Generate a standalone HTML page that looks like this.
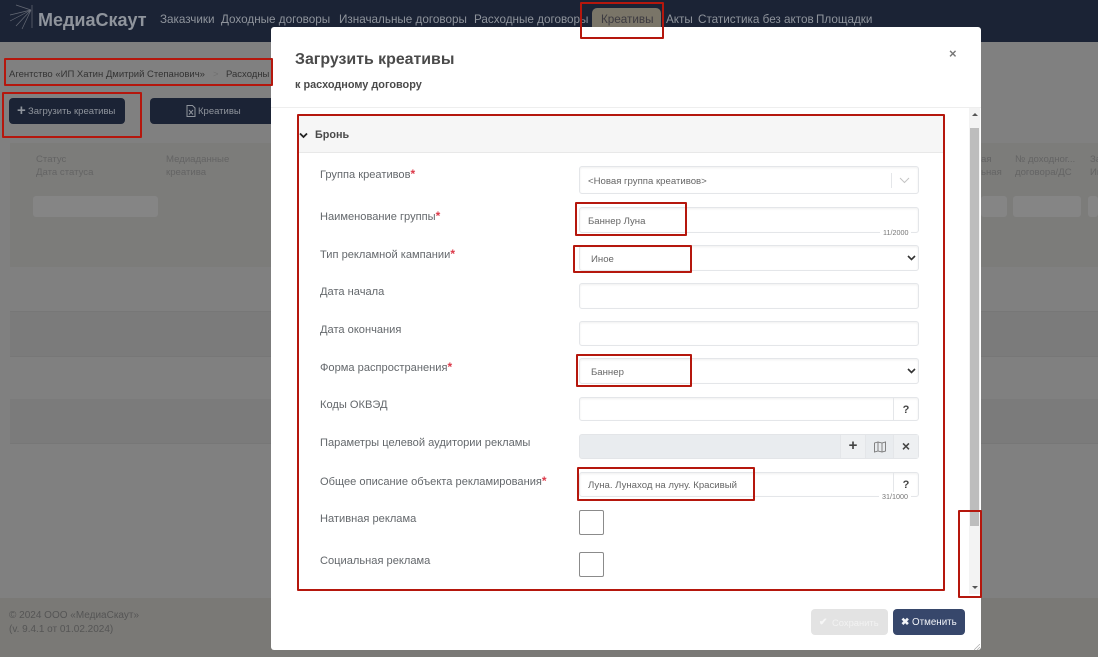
<!DOCTYPE html>
<html lang="ru">
<head>
<meta charset="utf-8">
<title>МедиаСкаут</title>
<style>
html,body{margin:0;padding:0}
body{width:1098px;height:657px;overflow:hidden;position:relative;background:#808080;font-family:"Liberation Sans",sans-serif;color:#555}
.a{position:absolute;white-space:nowrap}
.red{position:absolute;border:2px solid #b5170d;box-sizing:border-box;border-radius:1px}
.nav{position:absolute;top:12px;font-size:11.7px;line-height:16px;color:#8f949c;white-space:nowrap}
.lbl{position:absolute;left:320px;font-size:11.1px;line-height:15px;color:#64686c;white-space:nowrap}
.lbl b{color:#dc3a4a;font-weight:700;font-size:12px}
.inp{position:absolute;left:579px;width:340px;box-sizing:border-box;background:#fff;border:1px solid #e4e6e9;border-radius:3px;box-shadow:inset 0 1px 2px #f0f0f0;font-size:9.6px;color:#666;line-height:28px;padding-left:8px;white-space:nowrap}
.cb{position:absolute;left:579px;width:25px;height:25px;box-sizing:border-box;border:1px solid #8b8b8b;border-radius:2px;background:#fff}
.addon{position:absolute;top:0;bottom:0;border-left:1px solid #e4e6e9;text-align:center;font-weight:700;color:#444}
.small{position:absolute;font-size:7.2px;color:#777;background:#fff;padding:0 3px;line-height:9px}
.th{position:absolute;top:153px;font-size:9.6px;line-height:13px;color:#646464;white-space:nowrap}
.filter{position:absolute;top:196px;height:21px;background:#858585;border-radius:3px}
</style>
</head>
<body>
<!-- header -->
<div class="a" style="left:0;top:0;width:1098px;height:42px;background:#1b2335"></div>
<svg class="a" style="left:8px;top:4px" width="26" height="26" viewBox="0 0 26 26" fill="none" stroke="#666b76" stroke-width=".7"><path d="M24 1V24M23 6L8 1M23 6L2 11M23 6L2 17M23 6L8 22M23 6L14 25"/></svg>
<div class="a" style="left:38px;top:9px;font-size:18px;line-height:22px;font-weight:700;color:#8f949c">МедиаСкаут</div>
<div class="nav" style="left:160px">Заказчики</div>
<div class="nav" style="left:221px">Доходные договоры</div>
<div class="nav" style="left:339px">Изначальные договоры</div>
<div class="nav" style="left:474px">Расходные договоры</div>
<div class="a" style="left:592px;top:8px;width:69px;height:20px;background:#7a7568;border-radius:5px 5px 0 0"></div>
<div class="nav" style="left:601px;color:#3c3a40">Креативы</div>
<div class="nav" style="left:666px">Акты</div>
<div class="nav" style="left:698px">Статистика без актов</div>
<div class="nav" style="left:816px">Площадки</div>

<!-- page behind -->
<div class="a" style="left:9px;top:68px;font-size:9.5px;line-height:14px;color:#333">Агентство «ИП Хатин Дмитрий Степанович»</div>
<div class="a" style="left:213px;top:68px;font-size:9.5px;line-height:14px;color:#707070">&gt;</div>
<div class="a" style="left:226px;top:68px;font-size:9.5px;line-height:14px;color:#333">Расходны</div>
<div class="a" style="left:9px;top:98px;width:116px;height:26px;background:#1b2335;border-radius:4px"></div>
<div class="a" style="left:17px;top:103px;font-size:15px;line-height:15px;font-weight:700;color:#8f949c">+</div>
<div class="a" style="left:28px;top:105px;font-size:9.5px;line-height:14px;color:#8f949c">Загрузить креативы</div>
<div class="a" style="left:150px;top:98px;width:122px;height:26px;background:#1b2335;border-radius:4px 0 0 4px"></div>
<svg class="a" style="left:186px;top:105px" width="10" height="12" viewBox="0 0 10 12" fill="none" stroke="#8f949c"><path d="M1 .5H6.500L9 3V11.500H1ZM3 5L7 9.500M7 5L3 9.500"/></svg>
<div class="a" style="left:198px;top:105px;font-size:9.5px;line-height:14px;color:#8f949c">Креативы</div>
<div class="a" style="left:10px;top:143px;width:261px;height:124px;background:#7c7c7a"></div>
<div class="a" style="left:981px;top:143px;width:117px;height:124px;background:#7c7c7a"></div>
<div class="th" style="left:36px">Статус<br>Дата статуса</div>
<div class="th" style="left:166px">Медиаданные<br>креатива</div>
<div class="th" style="left:981px">ая<br>ьная</div>
<div class="th" style="left:1015px">№ доходног...<br>договора/ДС</div>
<div class="th" style="left:1090px">За<br>Ин</div>
<div class="filter" style="left:33px;width:125px"></div>
<div class="filter" style="left:981px;width:26px"></div>
<div class="filter" style="left:1013px;width:68px"></div>
<div class="filter" style="left:1088px;width:10px"></div>
<div class="a" style="left:10px;top:311px;width:261px;height:44px;background:#7b7b7b;border-top:1px solid #777;border-bottom:1px solid #777"></div>
<div class="a" style="left:10px;top:399px;width:261px;height:44px;background:#7b7b7b;border-bottom:1px solid #777"></div>
<div class="a" style="left:981px;top:311px;width:117px;height:44px;background:#7b7b7b;border-top:1px solid #777;border-bottom:1px solid #777"></div>
<div class="a" style="left:981px;top:399px;width:117px;height:44px;background:#7b7b7b;border-bottom:1px solid #777"></div>
<div class="a" style="left:0;top:598px;width:1098px;height:59px;background:#7a7976"></div>
<div class="a" style="left:9px;top:609px;font-size:10px;line-height:14px;color:#555">© 2024 ООО «МедиаСкаут»<br>(v. 9.4.1 от 01.02.2024)</div>

<!-- modal -->
<div class="a" style="left:271px;top:27px;width:710px;height:623px;background:#fff;border-radius:3px"></div>
<div class="a" style="left:295px;top:49px;font-size:15.9px;line-height:21px;font-weight:700;color:#4a4a4a">Загрузить креативы</div>
<div class="a" style="left:295px;top:78px;font-size:10.9px;line-height:15px;font-weight:700;color:#4a4a4a">к расходному договору</div>
<div class="a" style="left:949px;top:46px;font-size:13px;line-height:15px;font-weight:700;color:#777">×</div>
<div class="a" style="left:271px;top:107px;width:710px;height:1px;background:#eeeeee"></div>

<!-- section -->
<div class="a" style="left:299px;top:116px;width:645px;height:37px;background:#f6f6f6;border-bottom:1px solid #e8e8e8;box-sizing:border-box"></div>
<svg class="a" style="left:299px;top:132px" width="9" height="7" viewBox="0 0 9 7" fill="none" stroke="#222" stroke-width="1.800"><path d="M1 1.500L4.500 5L8 1.500"/></svg>
<div class="a" style="left:315px;top:128px;font-size:10.8px;line-height:15px;font-weight:700;color:#4a4a4a">Бронь</div>

<div class="lbl" style="top:167px">Группа креативов<b>*</b></div>
<div class="inp" style="top:166px;height:28px;line-height:29px">&lt;Новая группа креативов&gt;</div>
<div class="a" style="left:891px;top:173px;width:1px;height:15px;background:#e4e6e9"></div>
<svg class="a" style="left:899px;top:177px" width="11" height="7" viewBox="0 0 11 7" fill="none" stroke="#c4c4c4" stroke-width="1"><path d="M1 1L5.500 5.500L10 1"/></svg>

<div class="lbl" style="top:209px">Наименование группы<b>*</b></div>
<div class="inp" style="top:207px;height:26px">Баннер Луна</div>
<div class="small" style="left:880px;top:228px">11/2000</div>

<div class="lbl" style="top:247px">Тип рекламной кампании<b>*</b></div>
<div class="inp" style="top:245px;height:26px;padding-left:11px">Иное</div>
<svg class="a" style="left:907px;top:255px" width="9" height="6" viewBox="0 0 9 6" fill="none" stroke="#333" stroke-width="1.600"><path d="M1 1L4.500 4.500L8 1"/></svg>

<div class="lbl" style="top:285px">Дата начала</div>
<div class="inp" style="top:283px;height:26px"></div>

<div class="lbl" style="top:323px">Дата окончания</div>
<div class="inp" style="top:321px;height:25px"></div>

<div class="lbl" style="top:360px">Форма распространения<b>*</b></div>
<div class="inp" style="top:358px;height:26px;padding-left:11px">Баннер</div>
<svg class="a" style="left:907px;top:368px" width="9" height="6" viewBox="0 0 9 6" fill="none" stroke="#333" stroke-width="1.600"><path d="M1 1L4.500 4.500L8 1"/></svg>

<div class="lbl" style="top:398px">Коды ОКВЭД</div>
<div class="inp" style="top:397px;height:24px"><div class="addon" style="right:0;width:24px;line-height:24px;font-size:11px">?</div></div>

<div class="lbl" style="top:436px">Параметры целевой аудитории рекламы</div>
<div class="inp" style="top:434px;height:25px;background:#e9ecef;border-color:#e3e5e8;box-shadow:none">
  <div class="addon" style="right:0;width:24px;line-height:23px;font-size:14px;background:#eef0f2">×</div>
  <div class="addon" style="right:25px;width:27px;background:#e9ecef"></div>
  <div class="addon" style="right:53px;width:24px;line-height:22px;font-size:15px;background:#eef0f2">+</div>
</div>
<svg class="a" style="left:873px;top:441px" width="14" height="12" viewBox="0 0 14 12" fill="none" stroke="#777" stroke-width=".9"><path d="M1.500 2L5 1L9 2L12.500 1V10L9 11L5 10L1.500 11ZM5 1V10M9 2V11"/></svg>

<div class="lbl" style="top:474px">Общее описание объекта рекламирования<b>*</b></div>
<div class="inp" style="top:472px;height:25px;line-height:26px"><span>Луна. Лунаход на луну. Красивый</span><div class="addon" style="right:0;width:24px;line-height:24px;font-size:11px">?</div></div>
<div class="small" style="left:879px;top:492px">31/1000</div>

<div class="lbl" style="top:512px">Нативная реклама</div>
<div class="cb" style="top:510px"></div>
<div class="lbl" style="top:554px">Социальная реклама</div>
<div class="cb" style="top:552px"></div>

<!-- scrollbar -->
<div class="a" style="left:969px;top:108px;width:11px;height:486px;background:#f3f3f3"></div>
<div class="a" style="left:970px;top:128px;width:9px;height:398px;background:#bdbdbd"></div>
<div class="a" style="left:971.500px;top:113px;width:0;height:0;border:3px solid transparent;border-top:0;border-bottom:3px solid #555"></div>
<div class="a" style="left:971.500px;top:586px;width:0;height:0;border:3px solid transparent;border-bottom:0;border-top:3px solid #555"></div>

<!-- buttons -->
<div class="a" style="left:811px;top:609px;width:77px;height:26px;background:#e3e3e3;border-radius:4px"></div>
<div class="a" style="left:819px;top:616px;font-size:10px;line-height:13px;color:#f6f6f6;font-weight:700">✔</div>
<div class="a" style="left:832px;top:616px;font-size:9.400px;line-height:13px;color:#f2f2f2">Сохранить</div>
<div class="a" style="left:893px;top:609px;width:72px;height:26px;background:#37476b;border-radius:4px"></div>
<div class="a" style="left:901px;top:616px;font-size:10px;line-height:13px;color:#f2f4f8;font-weight:700">✖</div>
<div class="a" style="left:912px;top:616px;font-size:9.800px;line-height:13px;color:#f2f4f8">Отменить</div>
<svg class="a" style="left:974px;top:644px" width="6" height="6" viewBox="0 0 6 6" stroke="#aaa" stroke-width=".7"><path d="M0 6L6 0M3 6L6 3"/></svg>

<!-- red annotations -->
<div class="red" style="left:580px;top:2px;width:84px;height:37px"></div>
<div class="red" style="left:4px;top:58px;width:269px;height:28px"></div>
<div class="red" style="left:2px;top:92px;width:140px;height:46px"></div>
<div class="red" style="left:297px;top:114px;width:648px;height:477px"></div>
<div class="red" style="left:575px;top:202px;width:112px;height:34px"></div>
<div class="red" style="left:573px;top:245px;width:119px;height:28px"></div>
<div class="red" style="left:576px;top:354px;width:116px;height:33px"></div>
<div class="red" style="left:577px;top:467px;width:178px;height:34px"></div>
<div class="red" style="left:958px;top:510px;width:24px;height:88px"></div>
</body>
</html>
